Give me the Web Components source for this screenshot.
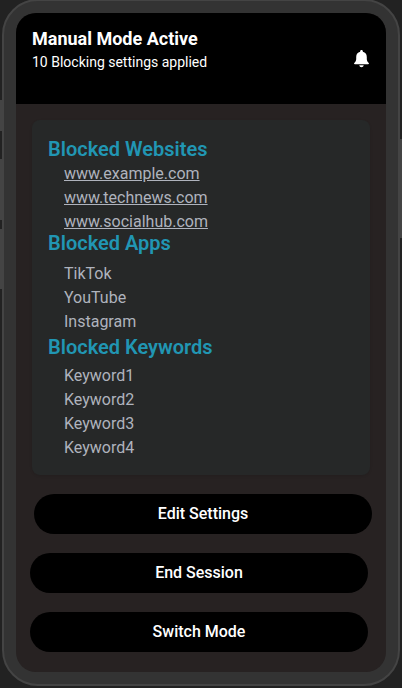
<!DOCTYPE html>
<html lang="en">
<head>
<meta charset="utf-8">
<meta name="viewport" content="width=device-width, initial-scale=1">
<title>Manual Mode</title>
<style>
html { background: #222; }
body { margin: 0; font-family: Roboto, "Liberation Sans", sans-serif; font-size: 16px; line-height: 24px; color: #fff; }
</style>
</head>
<body>
<phone-frame>
  <mode-header>
    <span slot="title">Manual Mode Active</span>
    <span slot="detail">10 Blocking settings applied</span>
  </mode-header>
  <mode-content>
    <settings-card>
      <block-list>
        <span slot="heading">Blocked Websites</span>
        <block-item href="#example">www.example.com</block-item>
        <block-item href="#technews">www.technews.com</block-item>
        <block-item href="#socialhub">www.socialhub.com</block-item>
      </block-list>
      <block-list class="apps">
        <span slot="heading">Blocked Apps</span>
        <block-item>TikTok</block-item>
        <block-item>YouTube</block-item>
        <block-item>Instagram</block-item>
      </block-list>
      <block-list class="keywords">
        <span slot="heading">Blocked Keywords</span>
        <block-item>Keyword1</block-item>
        <block-item>Keyword2</block-item>
        <block-item>Keyword3</block-item>
        <block-item>Keyword4</block-item>
      </block-list>
    </settings-card>
    <action-group>
      <action-button class="end">Edit Settings</action-button>
      <action-button>End Session</action-button>
      <action-button>Switch Mode</action-button>
    </action-group>
  </mode-content>
</phone-frame>
<script>
function define(name, html) {
  customElements.define(name, class extends HTMLElement {
    constructor() {
      super();
      this.attachShadow({ mode: 'open' }).innerHTML = html;
    }
  });
}

define('phone-frame', `
  <style>
    :host { display: block; position: relative; padding: 0 2px; margin-top: -1px; }
    .shell { border: 2px solid #444; border-radius: 36px; background: #333; padding: 12px; }
    .screen { overflow: hidden; border-radius: 20px; background: #272222; }
    .key { position: absolute; width: 2px; background: #444; }
    .left { left: 0; }
    .right { right: 0; }
    .switch { top: 101px; height: 31px; }
    .up { top: 160px; height: 61px; }
    .down { top: 230px; height: 60px; }
    .power { top: 140px; height: 99px; }
  </style>
  <div class="shell"><div class="screen"><slot></slot></div></div>
  <i class="key left switch"></i><i class="key left up"></i><i class="key left down"></i>
  <i class="key right power"></i>`);

define('mode-header', `
  <style>
    :host { display: flex; justify-content: space-between; align-items: flex-start; padding: 14px 16px 31px; background: #000; }
    h1, p { margin: 0; }
    h1 { font-size: 18px; font-weight: 700; line-height: 24px; }
    p { font-size: 14px; line-height: 22px; }
    button { margin: 22px 0 0; padding: 0; border: 0; background: none; color: inherit; width: 17px; height: 19px; }
    svg { display: block; }
  </style>
  <div><h1><slot name="title"></slot></h1><p><slot name="detail"></slot></p></div>
  <button type="button" aria-label="Notifications">
    <svg width="17" height="19" viewBox="0 0 17 19" fill="#fff" aria-hidden="true">
      <path d="M8.500 1c-.85 0-1.350.6-1.350 1.300v.55C4.700 3.400 3.200 5.400 3.200 7.900v2.200c0 1.600-.6 2.700-1.700 3.700-.8.750-.5 1.400.4 1.400h13.200c.9 0 1.200-.65.4-1.400-1.100-1-1.700-2.100-1.700-3.700V7.900c0-2.500-1.500-4.500-3.950-5.050V2.300C9.850 1.600 9.350 1 8.500 1z"/>
      <path d="M6.300 16.300h4.400c-.1 1.200-1.100 2-2.200 2s-2.100-.8-2.200-2z"/>
    </svg>
  </button>`);

define('mode-content', `
  <style>:host { display: block; padding: 16px 14px 20px; }</style>
  <slot></slot>`);

define('settings-card', `
  <style>
    :host { display: block; margin: 0 2px 19px; padding: 17px 16px 15px; border-radius: 8px; background: #262828; box-shadow: 0 1px 3px rgba(0, 0, 0, .1); }
    ::slotted(.apps) { margin-top: -3px; --list-gap: 7px; }
    ::slotted(.keywords) { margin-top: 1px; --list-gap: 5px; }
  </style>
  <slot></slot>`);

define('block-list', `
  <style>
    :host { display: block; }
    h2 { margin: 0 0 var(--list-gap, 1px); color: #2196b3; font-size: 20px; font-weight: 600; line-height: 24px; }
    .items { padding-left: 16px; }
  </style>
  <h2><slot name="heading"></slot></h2>
  <div class="items" role="list"><slot></slot></div>`);

customElements.define('block-item', class extends HTMLElement {
  constructor() {
    super();
    this.attachShadow({ mode: 'open' });
  }
  connectedCallback() {
    const href = this.getAttribute('href');
    this.setAttribute('role', 'listitem');
    this.shadowRoot.innerHTML = `
      <style>
        :host { display: block; color: #afb3bd; }
        a { color: inherit; text-decoration: underline; }
      </style>` + (href ? `<a href="${href}"><slot></slot></a>` : '<slot></slot>');
  }
});

define('action-group', `
  <style>:host { display: flex; flex-direction: column; gap: 19px; }</style>
  <slot></slot>`);

define('action-button', `
  <style>
    :host { display: block; margin-right: 4px; }
    :host(.end) { margin: 0 0 0 4px; }
    button { display: block; width: 100%; height: 40px; padding: 0; border: 0; border-radius: 20px; background: #000; color: #fff; font: 500 16px/24px Roboto, "Liberation Sans", sans-serif; }
  </style>
  <button type="button"><slot></slot></button>`);
</script>
</body>
</html>
